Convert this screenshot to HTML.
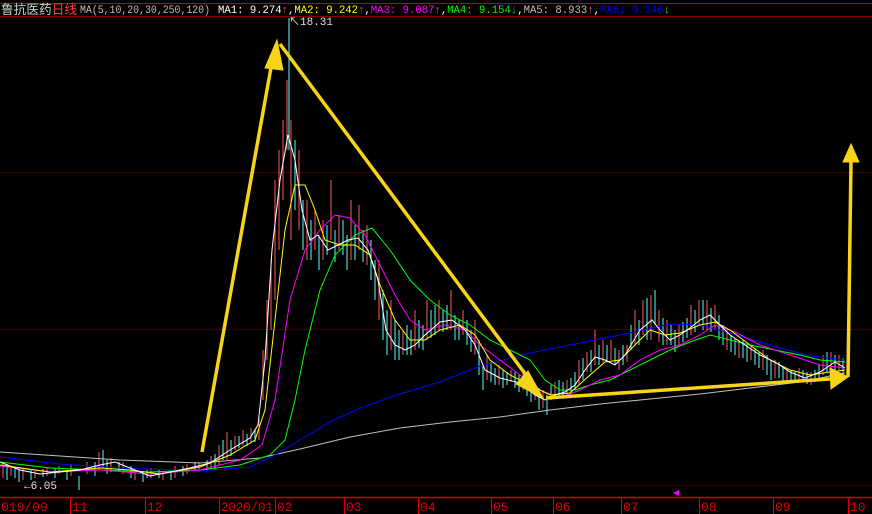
<!DOCTYPE html>
<html><head><meta charset="utf-8"><style>
html,body{margin:0;padding:0;background:#000;width:872px;height:514px;overflow:hidden}
svg{display:block}
text{font-family:"Liberation Mono","Noto Sans CJK SC",monospace}
</style></head><body>
<svg width="872" height="514" viewBox="0 0 872 514" xmlns="http://www.w3.org/2000/svg">
<rect width="872" height="514" fill="#000"/>
<line x1="0" y1="3.5" x2="872" y2="3.5" stroke="#c00000"/>
<line x1="0" y1="16.5" x2="872" y2="16.5" stroke="#800000"/>
<line x1="0" y1="172.5" x2="872" y2="172.5" stroke="#400000"/>
<line x1="0" y1="329.5" x2="872" y2="329.5" stroke="#400000"/>
<line x1="0" y1="485.5" x2="872" y2="485.5" stroke="#400000"/>
<line x1="0" y1="497.5" x2="872" y2="497.5" stroke="#d00000" stroke-width="1.5"/>
<path fill="none" stroke="#ff5a5a" d="M3 462V478M11 466V476M23 468V480M35 470V478M47 468V476M59 466V474M71 464V476M87 462V474M99 452V470M111 458V472M123 462V474M135 470V480M151 468V478M163 472V480M175 466V478M187 464V474M199 462V472M211 456V470M219 445V466M227 432V460M235 436V450M243 430V446M251 428V442M259 418V440M263 350V400M267 300V360M271 260V330M275 180V300M279 150V250M283 120V200M287 80V150M291 120V240M299 150V230M307 200V260M315 210V250M323 220V260M331 180V240M339 215V250M351 200V260M359 205V250M367 225V265M379 260V320M391 300V350M403 330V355M415 310V350M427 300V340M439 300V330M451 290V330M463 310V335M475 320V355M487 355V380M499 365V385M511 370V382M523 372V390M535 385V400M543 390V408M555 382V398M567 380V396M579 360V385M587 352V372M595 330V365M603 340V362M611 340V360M619 350V370M627 345V362M635 310V345M643 300V335M651 295V340M659 310V342M667 320V345M679 325V345M691 305V335M699 300V325M707 300V330M715 305V330M727 330V350M739 340V358M751 345V360M763 350V370M775 360V378M787 370V382M799 368V380M811 372V385M823 355V375M831 352V372M839 355V370"/>
<path fill="none" stroke="#54ffff" d="M7 464V480M15 468V478M19 470V482M31 470V480M43 469V477M55 468V478M67 470V480M79 476V490M95 462V476M103 450V468M107 460V474M119 462V472M131 466V478M143 472V482M147 470V478M159 470V478M171 472V480M183 466V476M195 462V470M207 460V470M215 454V470M223 440V460M231 440V456M239 436V448M247 434V446M255 430V442M289 18V150M295 140V210M303 200V250M311 220V260M319 235V270M327 225V255M335 230V262M343 220V255M347 235V270M355 225V260M363 230V262M371 240V280M375 260V300M383 290V340M387 310V355M395 320V360M399 330V360M407 325V355M411 330V355M419 320V348M423 325V350M431 310V338M435 305V335M443 310V332M447 305V330M455 315V340M459 320V340M467 320V345M471 330V352M479 340V375M483 365V390M491 362V382M495 368V385M503 370V388M507 372V385M515 372V388M519 375V392M527 378V396M531 382V402M539 388V410M547 395V415M551 385V400M559 380V396M563 382V398M571 378V394M575 372V390M583 358V380M591 350V372M599 345V365M607 345V362M615 348V365M623 345V365M631 325V350M639 320V345M647 298V340M655 290V325M663 318V345M671 325V345M675 330V352M683 322V342M687 318V338M695 310V332M703 300V330M711 308V332M719 315V340M723 325V345M731 335V352M735 338V355M743 340V358M747 345V362M755 348V365M759 352V368M767 355V375M771 360V380M779 362V378M783 368V382M791 370V383M795 372V382M803 370V382M807 372V384M815 370V382M819 365V378M827 352V372M835 355V372M843 358V375"/>
<polyline fill="none" stroke="#c0c0c0" points="0,452 60,456 120,460 200,463 260,458 300,449 350,437 400,428 450,422 500,417 550,410 600,404 650,399 700,394 750,388 800,382 845,373"/>
<polyline fill="none" stroke="#0000ff" points="0,457 60,464 120,468 200,471 250,467 275,455 300,440 330,422 360,408 400,394 440,382 480,366 530,353 580,343 630,333 670,324 700,325 730,333 770,345 810,356 845,360"/>
<polyline fill="none" stroke="#00ff00" points="0,462 50,468 100,470 150,472 200,470 240,465 270,455 285,440 295,400 305,350 320,290 335,255 355,235 372,228 390,250 410,280 430,300 450,315 470,325 490,340 510,350 530,360 545,380 560,390 575,390 590,385 610,380 630,370 650,360 670,350 690,342 710,335 730,340 750,345 775,350 800,355 820,360 845,362"/>
<polyline fill="none" stroke="#ff00ff" points="0,466 50,472 100,470 150,474 200,470 240,460 262,445 275,400 290,300 305,250 320,230 335,215 350,218 365,235 380,265 395,295 410,320 425,330 445,325 465,330 480,345 500,360 520,375 540,390 560,398 580,390 600,380 620,375 640,360 660,350 680,345 700,335 715,325 735,332 760,345 790,355 820,365 845,368"/>
<polyline fill="none" stroke="#ffff00" points="0,465 50,472 100,468 130,470 160,474 200,467 230,455 255,440 265,410 275,320 285,230 295,185 305,185 315,210 325,240 340,245 355,245 370,255 380,285 395,320 410,340 425,340 440,330 460,325 475,335 490,360 510,375 530,385 550,395 570,393 590,375 605,362 620,360 635,345 650,330 665,335 680,333 700,325 715,322 730,330 750,345 770,360 790,370 810,375 830,372 845,370"/>
<polyline fill="none" stroke="#ffffff" points="0,462 20,470 40,474 60,472 80,470 100,465 115,462 130,468 150,476 170,472 190,468 210,463 230,450 250,438 258,425 265,360 272,250 280,180 288,135 295,160 302,210 310,240 318,235 328,250 338,245 348,240 358,238 368,250 378,280 386,330 395,345 405,350 415,345 425,335 440,322 452,320 465,330 475,345 485,370 500,378 520,383 535,395 545,400 555,395 565,392 575,385 585,370 595,357 605,360 615,365 625,355 640,330 652,320 660,330 670,340 680,335 690,328 700,320 710,315 720,325 730,335 745,345 760,355 775,362 790,372 805,378 820,372 835,362 845,368"/>
<g fill="#f7d417" stroke="#f7d417">
<line x1="202" y1="452" x2="272" y2="62" stroke-width="3.5"/>
<polygon points="277,40 265,68 283,70" stroke-width="1"/>
<line x1="280" y1="44" x2="532" y2="383" stroke-width="3.5"/>
<polygon points="543,398 528,371 516,384" stroke-width="1"/>
<line x1="546" y1="398" x2="830" y2="379" stroke-width="3.5"/>
<polygon points="848,377 830,368 831,389" stroke-width="1"/>
<line x1="848" y1="377" x2="851" y2="162" stroke-width="3.5"/>
<polygon points="851,144 843,162 859,162" stroke-width="1"/>
</g>
<text x="289" y="25" fill="#e0e0e0" font-size="11">↖18.31</text>
<text x="24" y="489" fill="#e0e0e0" font-size="11">←6.05</text>
<text x="1" y="14" fill="#d0d0d0" font-size="13" textLength="76" lengthAdjust="spacingAndGlyphs" style="font-family:'Liberation Sans','Noto Sans CJK SC',sans-serif">鲁抗医药<tspan fill="#ff4040">日线</tspan></text>
<text x="80" y="13" font-size="11" fill="#c0c0c0" textLength="130" lengthAdjust="spacingAndGlyphs">MA(5,10,20,30,250,120)</text>
<text x="218" y="13" font-size="11" fill="#fff" textLength="452" lengthAdjust="spacingAndGlyphs">MA1: 9.274<tspan fill="#ff5050">↑</tspan>,<tspan fill="#ffff00">MA2: 9.242</tspan><tspan fill="#ff5050">↑</tspan>,<tspan fill="#ff00ff">MA3: 9.087</tspan><tspan fill="#ff5050">↑</tspan>,<tspan fill="#00ff00">MA4: 9.154</tspan><tspan fill="#00ff00">↓</tspan>,<tspan fill="#c0c0c0">MA5: 8.933</tspan><tspan fill="#ff5050">↑</tspan>,<tspan fill="#0000ff">MA6: 9.346</tspan><tspan fill="#00ff00">↓</tspan></text>
<polygon points="673,493 679,490 679,496" fill="#ff00ff"/>
<g fill="#e00000" font-size="13" style="font-family:'Liberation Sans',sans-serif" stroke="#e00000">
<line x1="70.5" y1="498" x2="70.5" y2="514"/><line x1="145.5" y1="498" x2="145.5" y2="514"/><line x1="219.5" y1="498" x2="219.5" y2="514"/><line x1="275.5" y1="498" x2="275.5" y2="514"/><line x1="344.5" y1="498" x2="344.5" y2="514"/><line x1="418.5" y1="498" x2="418.5" y2="514"/><line x1="491.5" y1="498" x2="491.5" y2="514"/><line x1="553.5" y1="498" x2="553.5" y2="514"/><line x1="621.5" y1="498" x2="621.5" y2="514"/><line x1="699.5" y1="498" x2="699.5" y2="514"/><line x1="773.5" y1="498" x2="773.5" y2="514"/><line x1="848.5" y1="498" x2="848.5" y2="514"/>
<g stroke="none">
<text x="1" y="511">019/09</text><text x="72" y="511">11</text><text x="147" y="511">12</text><text x="221" y="511" textLength="52" lengthAdjust="spacingAndGlyphs">2020/01</text><text x="277" y="511">02</text><text x="346" y="511">03</text><text x="420" y="511">04</text><text x="493" y="511">05</text><text x="555" y="511">06</text><text x="623" y="511">07</text><text x="701" y="511">08</text><text x="775" y="511">09</text><text x="850" y="511">10</text>
</g></g>
</svg>
</body></html>
